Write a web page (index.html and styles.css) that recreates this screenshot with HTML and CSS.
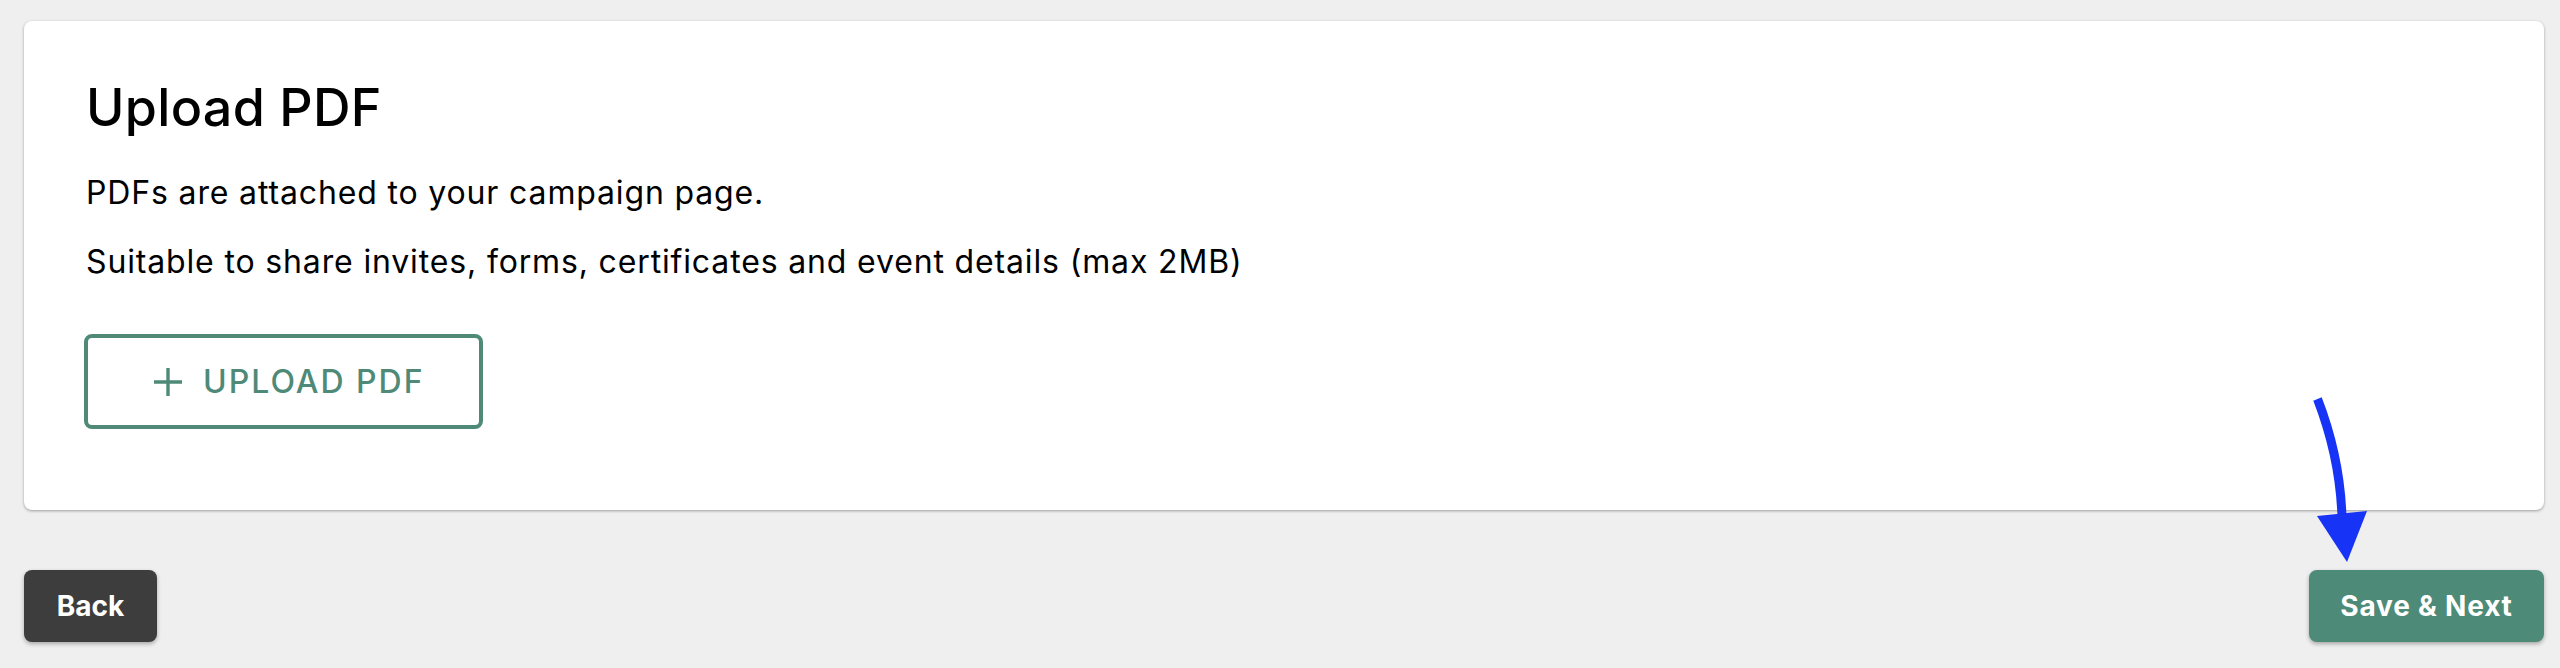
FILE: index.html
```html
<!DOCTYPE html>
<html lang="en">
<head>
<meta charset="utf-8">
<title>Upload PDF</title>
<link rel="stylesheet" href="styles.css">
</head>
<body>
<div class="page">
  <section class="card">
    <h1 class="title">Upload PDF</h1>
    <p class="text">PDFs are attached to your campaign page.</p>
    <p class="text">Suitable to share invites, forms, certificates and event details (max 2MB)</p>
    <button class="upload-btn" type="button">
      <svg class="plus" width="28" height="28" viewBox="0 0 28 28" aria-hidden="true">
        <path d="M14 0V28M0 14H28" stroke="currentColor" stroke-width="3.4" fill="none"/>
      </svg>
      <span>UPLOAD PDF</span>
    </button>
  </section>
  <div class="actions">
    <button class="btn btn-back" type="button">Back</button>
    <button class="btn btn-next" type="button">Save &amp; Next</button>
  </div>
</div>
<svg class="pointer" width="80" height="180" viewBox="0 0 80 180" aria-hidden="true">
  <path d="M17.5 9 Q40 67 42 127" stroke="#1733f6" stroke-width="9" fill="none"/>
  <polygon points="17,126 67,121 47,172" fill="#1733f6"/>
</svg>
</body>
</html>
```

FILE: styles.css
```css
html, body {
  margin: 0;
  padding: 0;
}

body {
  background: #efefef;
  font-family: Inter, "Open Sans", "Liberation Sans", sans-serif;
  color: #000;
  position: relative;
  min-height: 668px;
}

.page {
  padding: 21px 16px 0 24px;
}

.card {
  background: #fff;
  border-radius: 8px;
  box-shadow: 0 1px 3px rgba(0, 0, 0, 0.35);
  padding: 55px 60px 81px 60px;
  height: 489px;
  box-sizing: border-box;
}

.title {
  margin: 0 0 0 2px;
  font-size: 52px;
  line-height: 64px;
  font-weight: 500;
  letter-spacing: 0.3px;
}

.text {
  margin: 0 0 0 2px;
  font-size: 32px;
  line-height: 40px;
  font-weight: 400;
  letter-spacing: 0.85px;
}

.title + .text {
  margin-top: 33px;
}

.text + .text {
  margin-top: 29px;
}

.upload-btn {
  margin-top: 52px;
  width: 399px;
  height: 95px;
  box-sizing: border-box;
  border: 4px solid #4e8a77;
  border-radius: 8px;
  background: #fff;
  color: #4e8a77;
  display: flex;
  align-items: center;
  justify-content: flex-start;
  gap: 21px;
  padding: 0 0 0 66px;
  font-family: inherit;
  font-size: 32px;
  font-weight: 500;
  letter-spacing: 2px;
  cursor: pointer;
}

.plus {
  display: block;
  flex: none;
}

.actions {
  margin-top: 60px;
  display: flex;
  justify-content: space-between;
  align-items: center;
}

.btn {
  height: 72px;
  padding: 0;
  border: none;
  border-radius: 8px;
  color: #fff;
  font-family: inherit;
  font-size: 28px;
  font-weight: 700;
  box-shadow: 0 2px 4px rgba(0, 0, 0, 0.3);
  cursor: pointer;
}

.btn-back {
  background: #3d3d3d;
  width: 133px;
}

.btn-next {
  background: #4e8a78;
  width: 235px;
  letter-spacing: 0.8px;
}

.pointer {
  position: absolute;
  left: 2300px;
  top: 390px;
}
```
